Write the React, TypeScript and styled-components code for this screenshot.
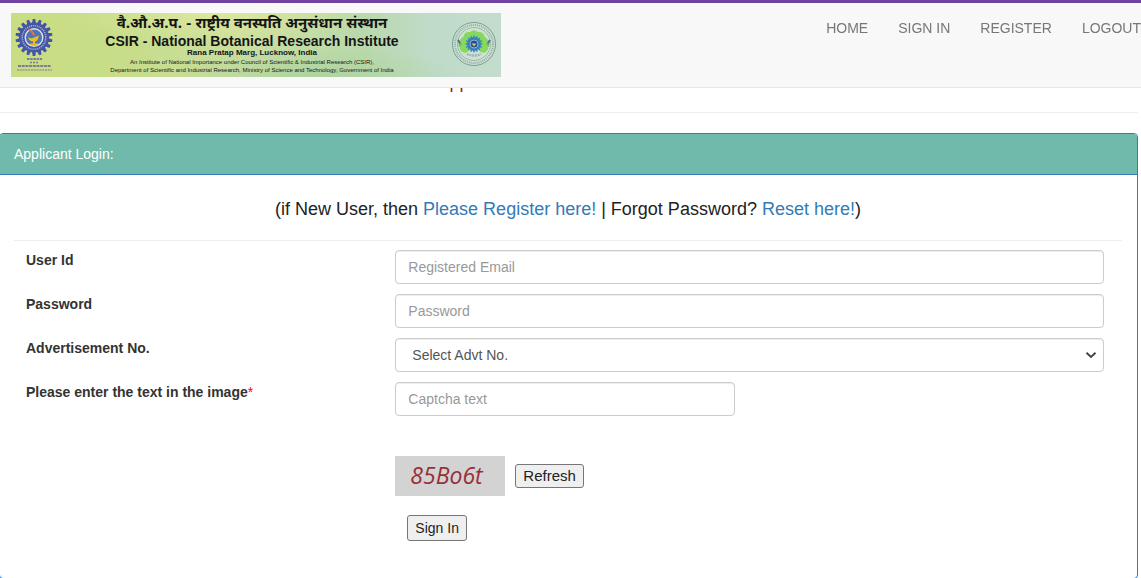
import React from 'react';
import styled, { createGlobalStyle } from 'styled-components';

const GlobalStyle = createGlobalStyle`
  *, *::before, *::after { box-sizing: border-box; }
  html { overflow-x: hidden; }
  body {
    margin: 0;
    background: #fff;
    color: #333;
    font: 14px/20px "Liberation Sans", Arial, sans-serif;
  }
  input, select, button { font-family: inherit; }
  a { color: #337ab7; text-decoration: none; }
`;

const Header = styled.header`
  position: fixed;
  top: 0;
  left: 0;
  right: 0;
  z-index: 10;
  display: flex;
  justify-content: space-between;
  align-items: flex-start;
  height: 88px;
  padding: 10px 0 0 11px;
  background: #f8f8f8;
  border-top: 3px solid #6f42a1;
  border-bottom: 1px solid #e7e7e7;
`;

const Banner = styled.a`
  display: flex;
  align-items: center;
  width: 490px;
  height: 64px;
  padding-right: 2px;
  color: #151515;
  background:
    radial-gradient(ellipse at 62% 100%, #aed4a0 0, transparent 34%),
    radial-gradient(ellipse at 42% 0, #dce79c 0, transparent 38%),
    linear-gradient(90deg, #c9dd82 0%, #c7dd89 22%, #c9dea0 48%, #b9d9ac 72%, #c0dbca 86%, #c4dccd 100%);
`;

const BannerText = styled.span`
  flex: 1;
  display: flex;
  flex-direction: column;
  align-items: center;
  height: 64px;
  padding-top: 3px;
  white-space: nowrap;
`;

const Hindi = styled.span`
  font: bold 15px/18px "Noto Sans Devanagari", "Noto Sans", "Liberation Serif", serif;
`;
const Institute = styled.span`
  font-size: 14px;
  line-height: 14px;
  font-weight: bold;
`;
const Place = styled.span`
  font-size: 8px;
  line-height: 10px;
  font-weight: bold;
`;
const Small = styled.span`
  font-size: 6px;
  line-height: 8px;
`;

const Nav = styled.nav`
  display: flex;
  gap: 30px;
  padding-top: 5px;
`;
const NavLink = styled.a`
  color: #777;
`;

const Main = styled.main`
  padding: 70px 3px 0 0;
`;
const PageTitle = styled.h1`
  margin: 0;
  color: #a01c1c;
  font-size: 18px;
  line-height: 24px;
  font-weight: normal;
  text-align: center;
`;
const Rule = styled.hr<{ $top: number; $bottom: number }>`
  margin: ${p => p.$top}px 0 ${p => p.$bottom}px;
  border: 0;
  border-top: 1px solid #eee;
`;

const Panel = styled.section`
  margin-left: -1px;
  border: 1px solid #337ab7;
  border-radius: 4px;
  background: #fff;
`;
const PanelHeading = styled.h2`
  margin: 0;
  padding: 10px 14px;
  background: #70baab;
  color: #fff;
  font-size: 14px;
  line-height: 20px;
  font-weight: normal;
  border-bottom: 1px solid #337ab7;
  border-radius: 3px 3px 0 0;
`;
const PanelBody = styled.div`
  padding: 24px 15px 37px 14px;
`;
const Hint = styled.p`
  margin: 0;
  color: #222;
  font-size: 18px;
  line-height: 20px;
  text-align: center;
`;

const Form = styled.form`
  display: flex;
  flex-direction: column;
  gap: 10px;
`;
const Row = styled.div`
  display: grid;
  grid-template-columns: 1fr 2fr;
  align-items: start;
`;
const Label = styled.label`
  padding-left: 12px;
  font-weight: bold;
`;
const Star = styled.span`
  color: #f00;
  font-weight: normal;
`;
const Cell = styled.div`
  padding: 0 18px 0 12px;
`;
const fieldStyle = `
  display: block;
  width: 100%;
  height: 34px;
  padding: 6px 12px;
  border: 1px solid #ccc;
  border-radius: 4px;
  background-color: #fff;
  box-shadow: inset 0 1px 1px rgba(0, 0, 0, 0.075);
  color: #555;
  font-size: 14px;
  line-height: 20px;
`;
const TextField = styled.input<{ $short?: boolean }>`
  ${fieldStyle}
  max-width: ${p => (p.$short ? '340px' : 'none')};
  &::placeholder { color: #999; opacity: 1; }
`;
const SelectBox = styled.div`
  display: grid;
  align-items: center;
  & > * { grid-area: 1 / 1; }
`;
const SelectField = styled.select`
  ${fieldStyle}
  appearance: none;
  padding-left: 16px;
`;
const Chevron = styled.svg`
  justify-self: end;
  margin-right: 7px;
  pointer-events: none;
`;
const CaptchaRow = styled.div`
  display: flex;
  align-items: center;
  gap: 10px;
  margin-top: 30px;
`;
const Captcha = styled.div`
  width: 110px;
  height: 40px;
  padding-left: 15px;
  background: #d3d3d3;
  color: #98303a;
  font: italic 23px/38px "Open Sans", "Noto Sans", sans-serif;
`;
const Button = styled.button<{ $large?: boolean }>`
  height: ${p => (p.$large ? 24 : 26)}px;
  padding: 0 7px;
  border: 1px solid #767676;
  border-radius: 3px;
  background: #efefef;
  color: #222;
  font-size: ${p => (p.$large ? 15 : 14)}px;
  line-height: 20px;
`;
const Submit = styled.div`
  padding: 9px 0 0 24px;
`;

const teeth = (n: number) => Array.from({ length: n }, (_, i) => (360 / n) * i);

function CsirLogo() {
  return (
    <svg width="44" height="60" viewBox="0 0 44 60" aria-label="CSIR">
      <g transform="translate(0 1.5)">
        <g fill="#4456a6">
          {teeth(18).map(a => (
            <path key={a} d="M21 7 21.7 2.5h2.6L25 7z" transform={`rotate(${a} 23 21)`} />
          ))}
          <circle cx="23" cy="21" r="15" />
        </g>
        <circle cx="23" cy="21" r="11.8" fill="none" stroke="#b3bbd6" strokeWidth="1.6" strokeDasharray="1 1" />
        <circle cx="23" cy="21" r="8.8" fill="#4f74b5" stroke="#dfe5e2" strokeWidth="1.4" />
        <path d="M17 21c3 1 4 1 6 0l5-2c-1 4-2 6-4 6v2h3v2h-8v-2h3v-2c-3 0-4-2-5-4z" fill="#e9bc2c" />
        <path d="M22 19c-1-3-4-4-5-7 4 1 6 3 7 7z" fill="#df7541" />
      </g>
      <g stroke="#6a679d" fill="none" opacity=".8">
        <path d="M16 44h15" strokeWidth="2" strokeDasharray="2.5 .7" />
        <path d="M19 47.5h9" strokeWidth="1.4" strokeDasharray="2 1" />
        <path d="M7 51h33" strokeWidth="2.2" strokeDasharray="3 .7" />
        <path d="M6 55h35" strokeDasharray="2 .8" />
      </g>
    </svg>
  );
}

function NbriLogo() {
  return (
    <svg width="50" height="50" viewBox="0 0 50 50" aria-label="NBRI">
      <g transform="translate(0 -1)">
        <circle cx="25" cy="25" r="21.5" fill="#cfe0d6" stroke="#75a18e" />
        <circle cx="25" cy="25" r="19" fill="none" stroke="#8eada0" strokeWidth="2" strokeDasharray="1 1" />
        <circle cx="25" cy="25" r="16.5" fill="#cfe2d2" stroke="#8caf9c" strokeWidth=".8" />
        <g fill="#86d95e">
          {[-105, -70, -35, 0, 35, 70, 105].map(a => (
            <circle key={a} cx="25" cy="16.5" r="5.2" transform={`rotate(${a} 25 26)`} />
          ))}
        </g>
        <path d="m9 20 4 5-3 3zM41 20l-4 5 3 3z" fill="#74b64b" />
        <path d="m9 21 2 3M41 21l-2 3" stroke="#5369ac" strokeWidth="2" />
        <g fill="#397fbd">
          {teeth(16).map(a => (
            <path key={a} d="m24 19 .5-2.5h1L26 19z" transform={`rotate(${a} 25 25)`} />
          ))}
          <circle cx="25" cy="25" r="6.8" />
        </g>
        <circle cx="25" cy="25" r="4" fill="#274d91" stroke="#85b7d1" />
        <path d="M22.5 24.5h5l-2.5 3z" fill="#d4c663" />
        <path d="M18 35c4 2 10 2 14 0" fill="none" stroke="#a3b2b8" strokeWidth="2.4" strokeDasharray="2 .7" />
      </g>
    </svg>
  );
}

const NAV = ['HOME', 'SIGN IN', 'REGISTER', 'LOGOUT'];

export default function App() {
  return (
    <>
      <GlobalStyle />
      <Header>
        <Banner href="#">
          <CsirLogo />
          <BannerText>
            <Hindi lang="hi">वै.औ.अ.प. - राष्ट्रीय वनस्पति अनुसंधान संस्थान</Hindi>
            <Institute>CSIR - National Botanical Research Institute</Institute>
            <Place>Rana Pratap Marg, Lucknow, India</Place>
            <Small>An Institute of National Importance under Council of Scientific &amp; Industrial Research (CSIR),</Small>
            <Small>Department of Scientific and Industrial Research, Ministry of Science and Technology, Government of India</Small>
          </BannerText>
          <NbriLogo />
        </Banner>
        <Nav>
          {NAV.map(item => (
            <NavLink key={item} href="#">{item}</NavLink>
          ))}
        </Nav>
      </Header>
      <Main>
        <PageTitle>Application for Recruitment Form</PageTitle>
        <Rule $top={18} $bottom={20} />
        <Panel>
          <PanelHeading>Applicant Login:</PanelHeading>
          <PanelBody>
            <Hint>
              (if New User, then <a href="#">Please Register here!</a> | Forgot Password? <a href="#">Reset here!</a>)
            </Hint>
            <Rule $top={21} $bottom={9} />
            <Form onSubmit={e => e.preventDefault()}>
              <Row>
                <Label htmlFor="user">User Id</Label>
                <Cell><TextField id="user" type="email" placeholder="Registered Email" /></Cell>
              </Row>
              <Row>
                <Label htmlFor="password">Password</Label>
                <Cell><TextField id="password" type="password" placeholder="Password" /></Cell>
              </Row>
              <Row>
                <Label htmlFor="advt">Advertisement No.</Label>
                <Cell>
                  <SelectBox>
                    <SelectField id="advt"><option>Select Advt No.</option></SelectField>
                    <Chevron width="12" height="12" viewBox="0 0 12 12" fill="none" stroke="#444" strokeWidth="2">
                      <path d="M1.5 3.8 6 8l4.500-4.200" />
                    </Chevron>
                  </SelectBox>
                </Cell>
              </Row>
              <Row>
                <Label htmlFor="captcha">Please enter the text in the image<Star>*</Star></Label>
                <Cell><TextField id="captcha" $short placeholder="Captcha text" /></Cell>
              </Row>
              <Row>
                <span />
                <Cell>
                  <CaptchaRow>
                    <Captcha>85Bo6t</Captcha>
                    <Button type="button" $large>Refresh</Button>
                  </CaptchaRow>
                </Cell>
              </Row>
              <Row>
                <span />
                <Submit><Button type="submit">Sign In</Button></Submit>
              </Row>
            </Form>
          </PanelBody>
        </Panel>
      </Main>
    </>
  );
}
